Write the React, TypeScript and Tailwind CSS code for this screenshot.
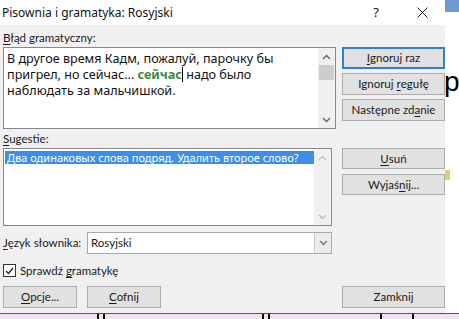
import React from "react";

const U = ({ children }: { children: React.ReactNode }) => (
  <span className="underline underline-offset-2">{children}</span>
);

const Btn = ({
  children,
  className = "",
  def = false,
}: {
  children: React.ReactNode;
  className?: string;
  def?: boolean;
}) => (
  <div
    className={`flex items-center justify-center bg-[#e1e1e1] text-[11.5px] text-[#1a1a1a] whitespace-nowrap ${
      def ? "border-2 border-[#2f7fc9]" : "border border-[#adadad]"
    } ${className}`}
  >
    {children}
  </div>
);

const Chevron = ({ up = false, color = "#606060" }: { up?: boolean; color?: string }) => (
  <svg width="9" height="6" viewBox="0 0 9 6">
    <path
      d={up ? "M1 5 L4.5 1.5 L8 5" : "M1 1 L4.5 4.5 L8 1"}
      fill="none"
      stroke={color}
      strokeWidth="1.3"
    />
  </svg>
);

export default function App() {
  return (
    <div
      className="w-[459px] h-[319px] overflow-hidden flex flex-col bg-[#f2e2ef]"
      style={{ fontFamily: 'Lato, "Noto Sans", sans-serif' }}
    >
      <div className="flex h-[313px]">
        {/* Dialog */}
        <div className="w-[452px] flex flex-col bg-[#f0f0f0]">
          {/* Title bar */}
          <div
            className="h-[25px] bg-white flex items-center text-[12px] text-[#111]"
            style={{ fontFamily: '"Noto Sans", sans-serif' }}
          >
            <span className="pl-[2px] flex-1">Pisownia i gramatyka: Rosyjski</span>
            <span className="w-[46px] text-center text-[13px]">?</span>
            <span className="w-[46px] flex justify-center">
              <svg width="11" height="11" viewBox="0 0 11 11">
                <path d="M0.5 0.5 L10.5 10.5 M10.5 0.5 L0.5 10.5" stroke="#222" strokeWidth="1" />
              </svg>
            </span>
          </div>
          {/* Body */}
          <div className="flex-1 flex pl-[3px] pb-[5px] text-[11.5px] text-[#1a1a1a]">
            {/* Left column */}
            <div className="w-[333px] flex flex-col">
              <div className="mt-[5px] h-[16px] leading-[16px]">
                <U>B</U>łąd gramatyczny:
              </div>
              <div className="mt-[1px] h-[82px] bg-white border border-[#828790] flex">
                <div
                  className="flex-1 pl-[3px] pt-[3px] text-[12.6px] leading-[16px] text-[#111] whitespace-nowrap"
                  style={{ fontFamily: '"Noto Sans", sans-serif' }}
                >
                  В другое время Кадм, пожалуй, парочку бы
                  <br />
                  пригрел, но сейчас… <span className="font-bold text-[#3b8b3b]">сейчас</span>
                  <span className="inline-block w-px h-[15px] bg-black align-[-3px]" /> надо было
                  <br />
                  наблюдать за мальчишкой.
                </div>
                <div className="w-[17px] bg-[#f0f0f0] flex flex-col items-center">
                  <div className="h-[17px] flex items-center justify-center">
                    <Chevron up />
                  </div>
                  <div className="w-[15px] h-[15px] bg-[#cdcdcd]" />
                  <div className="flex-1" />
                  <div className="h-[17px] flex items-center justify-center">
                    <Chevron />
                  </div>
                </div>
              </div>
              <div className="mt-[2px] h-[16px] leading-[16px]">
                <U>S</U>ugestie:
              </div>
              <div className="mt-[1px] w-[329px] h-[78px] bg-white border border-[#828790] flex">
                <div className="flex-1 pl-[1px] pt-[2px] min-w-0">
                  <div
                    className="h-[13px] leading-[13px] bg-[#3b8fe6] text-white pl-[2px] text-[11px] whitespace-nowrap overflow-hidden"
                    style={{ fontFamily: '"Noto Sans", sans-serif' }}
                  >
                    Два одинаковых слова подряд. Удалить второе слово?
                  </div>
                </div>
                <div className="w-[17px] bg-[#f0f0f0] flex flex-col items-center justify-between">
                  <div className="h-[17px] flex items-center justify-center">
                    <Chevron up color="#c0c0c0" />
                  </div>
                  <div className="h-[17px] flex items-center justify-center">
                    <Chevron color="#c0c0c0" />
                  </div>
                </div>
              </div>
              <div className="mt-[6px] h-[22px] flex items-center">
                <div className="w-[84px]">
                  <U>J</U>ęzyk słownika:
                </div>
                <div className="w-[245px] h-full bg-white border border-[#a9a9a9] flex items-center">
                  <span className="flex-1 pl-[3px]">Rosyjski</span>
                  <div className="w-[17px] h-full bg-[#ececec] border-l border-[#c8c8c8] flex items-center justify-center">
                    <Chevron color="#707070" />
                  </div>
                </div>
              </div>
              <div className="mt-[10px] h-[13px] flex items-center">
                <div className="w-[13px] h-[13px] bg-white border border-[#333] flex items-center justify-center">
                  <svg width="9" height="8" viewBox="0 0 9 8">
                    <path d="M1 4 L3.5 6.5 L8 1" fill="none" stroke="#222" strokeWidth="1.3" />
                  </svg>
                </div>
                <span className="ml-[4px]">
                  Sprawdź <U>g</U>ramatykę
                </span>
              </div>
              <div className="mt-auto flex gap-[10px]">
                <Btn className="w-[74px] h-[22px]">
                  <U>O</U>pcje...
                </Btn>
                <Btn className="w-[74px] h-[22px]">
                  <U>C</U>ofnij
                </Btn>
              </div>
            </div>
            {/* Right column */}
            <div className="ml-[6px] w-[103px] flex flex-col">
              <Btn def className="mt-[22px] h-[22px]">
                <U>I</U>gnoruj raz
              </Btn>
              <Btn className="mt-[4px] h-[22px]">
                Ignoruj&nbsp;<U>r</U>egułę
              </Btn>
              <Btn className="mt-[4px] h-[22px]">
                Następne zd<U>a</U>nie
              </Btn>
              <Btn className="mt-[27px] h-[21px]">
                <U>U</U>suń
              </Btn>
              <Btn className="mt-[5px] h-[21px]">
                Wyjaś<U>n</U>ij...
              </Btn>
              <Btn className="mt-auto h-[22px]">Zamknij</Btn>
            </div>
          </div>
        </div>
        <div className="w-px bg-[#8d3f8d]" />
        {/* Background document strip */}
        <div className="flex-1 flex flex-col bg-white">
          <div className="h-[12px] bg-[#6d9ad0]" />
          <div className="h-[56px]" />
          <div
            className="text-[28px] leading-[28px] text-black -ml-[1px]"
            style={{ fontFamily: '"Liberation Sans", sans-serif' }}
          >
            р
          </div>
          <div className="h-[74px]" />
          <div className="h-[10px] w-[5px] bg-[#e8c870]" />
        </div>
      </div>
      <div className="h-px bg-[#7d3a7d]" />
      <div className="flex-1 flex items-start">
        <div className="ml-[97px] w-[2px] h-[5px] bg-black" />
        <div className="ml-[4px] w-[2px] h-[5px] bg-black" />
        <div className="ml-[157px] w-[2px] h-[5px] bg-black" />
        <div className="ml-[4px] w-[2px] h-[5px] bg-black" />
        <div className="ml-[110px] w-[2px] h-[5px] bg-black" />
        <div className="ml-[30px] w-[2px] h-[5px] bg-black" />
      </div>
    </div>
  );
}
